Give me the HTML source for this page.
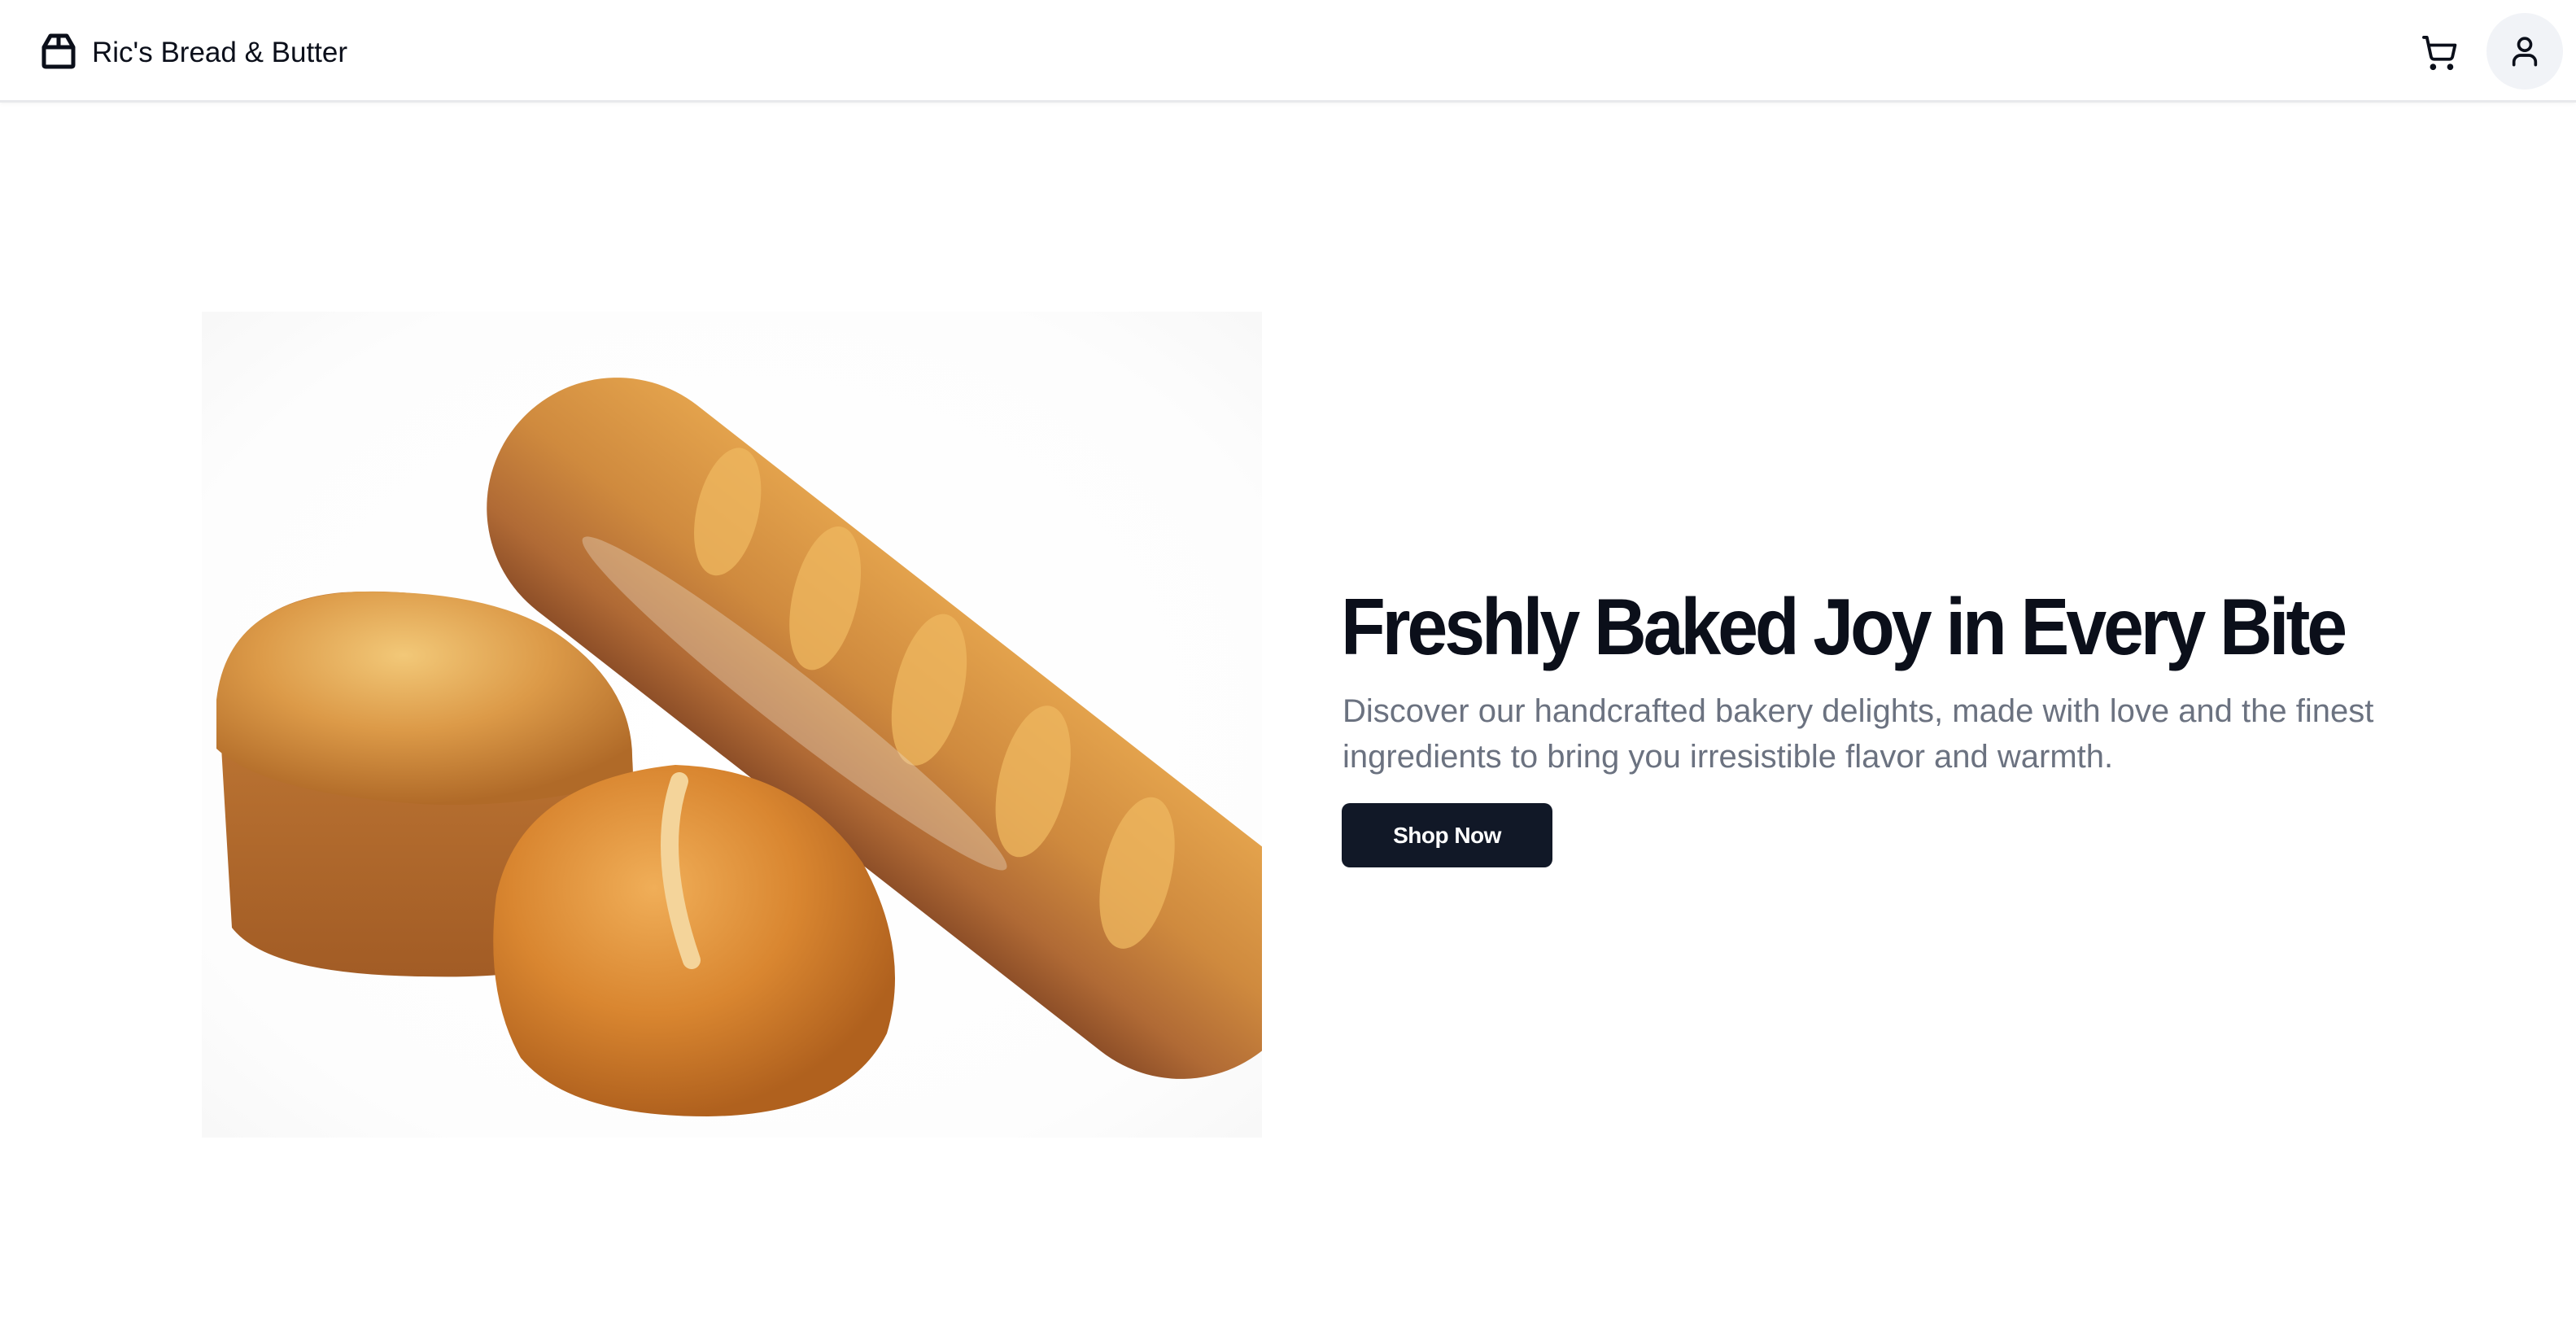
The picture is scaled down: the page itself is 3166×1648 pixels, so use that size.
<!DOCTYPE html>
<html><head><meta charset="utf-8"><style>
*{margin:0;padding:0;box-sizing:border-box}
html,body{width:3166px;height:1648px;background:#fff;overflow:hidden;font-family:"Liberation Sans",sans-serif}
.hdr{position:absolute;left:0;top:0;width:3166px;height:126px;border-bottom:3px solid #e8e9ec;box-shadow:0 2px 4px rgba(0,0,0,.04)}
.logo{position:absolute;left:50px;top:40px}
.brand{position:absolute;left:113px;top:45px;font-size:35px;color:#0b0f1a;letter-spacing:0px}
.cart{position:absolute;left:2975px;top:42px}
.av{position:absolute;left:3056px;top:16px;width:94px;height:94px;border-radius:50%;background:#f1f3f7}
.av svg{position:absolute;left:27px;top:25px}
.img{position:absolute;left:248px;top:383px;width:1303px;height:1015px}
h1{position:absolute;left:1648px;top:714px;font-size:98px;font-weight:bold;color:#0b0f1a;letter-spacing:-4.5px;white-space:nowrap;transform-origin:left top;transform:scaleX(0.915)}
p{position:absolute;left:1650px;top:846px;width:1310px;font-size:40px;line-height:56px;color:#6b7280;letter-spacing:0px}
.btn{position:absolute;left:1649px;top:987px;width:259px;height:79px;border-radius:10px;background:#111827;color:#fff;font-size:28px;font-weight:bold;text-align:center;line-height:79px;letter-spacing:-0.5px}
</style></head><body>
<div class="hdr">
<svg class="logo" width="44" height="46" viewBox="0 0 44 46" fill="none" stroke="#0b0f1a" stroke-width="5" stroke-linejoin="round">
<path d="M4 18 L12 4 H32 L40 18 V40 Q40 42 38 42 H6 Q4 42 4 40 Z"/><path d="M4 18 H40"/><path d="M22 4 V18"/></svg>
<div class="brand">Ric's Bread &amp; Butter</div>
<svg class="cart" width="46" height="46" viewBox="0 0 24 24" fill="none" stroke="#0b0f1a" stroke-width="2" stroke-linecap="round" stroke-linejoin="round"><circle cx="8" cy="21" r="1"/><circle cx="19" cy="21" r="1"/><path d="M2.05 2.05h2l2.66 12.42a2 2 0 0 0 2 1.58h9.78a2 2 0 0 0 1.95-1.57l1.65-7.43H5.12"/></svg>
<div class="av"><svg width="40" height="44" viewBox="0 0 24 24" fill="none" stroke="#0b0f1a" stroke-width="2.2" stroke-linecap="round"><circle cx="12" cy="7" r="4.5"/><path d="M4 22v-2a5 5 0 0 1 5-5h6a5 5 0 0 1 5 5v2"/></svg></div>
</div>

<svg class="img" viewBox="248 383 1303 1015" width="1303" height="1015">
<defs>
<radialGradient id="bg" cx="50%" cy="50%" r="70%"><stop offset="0" stop-color="#fff"/><stop offset=".8" stop-color="#fdfdfd"/><stop offset="1" stop-color="#f8f8f8"/></radialGradient>
<linearGradient id="loaf" x1="0" y1="0" x2="0" y2="1"><stop offset="0" stop-color="#e3a24c"/><stop offset=".45" stop-color="#cf8a3e"/><stop offset=".8" stop-color="#b06a35"/><stop offset="1" stop-color="#8e4f28"/></linearGradient>
<radialGradient id="pan" cx="45%" cy="30%" r="70%"><stop offset="0" stop-color="#f2c878"/><stop offset=".5" stop-color="#dc9a48"/><stop offset="1" stop-color="#b06a28"/></radialGradient>
<linearGradient id="panb" x1="0" y1="0" x2="0" y2="1"><stop offset="0" stop-color="#c9813a"/><stop offset="1" stop-color="#a25c25"/></linearGradient>
<radialGradient id="bun" cx="40%" cy="35%" r="65%"><stop offset="0" stop-color="#f0ae58"/><stop offset=".55" stop-color="#d98630"/><stop offset="1" stop-color="#b0611e"/></radialGradient>
<clipPath id="c"><rect x="248" y="383" width="1303" height="1015"/></clipPath>
</defs>
<rect x="248" y="383" width="1303" height="1015" fill="url(#bg)"/>
<g clip-path="url(#c)">
<g transform="translate(1105 895) rotate(38)">
<rect x="-600" y="-160" width="1200" height="320" rx="160" fill="url(#loaf)"/>
<g fill="#efb860" opacity=".75">
<ellipse cx="-330" cy="-80" rx="38" ry="80" transform="rotate(-25 -330 -80)"/>
<ellipse cx="-170" cy="-70" rx="40" ry="90" transform="rotate(-25 -170 -70)"/>
<ellipse cx="0" cy="-60" rx="42" ry="95" transform="rotate(-25 0 -60)"/>
<ellipse cx="170" cy="-50" rx="42" ry="95" transform="rotate(-25 170 -50)"/>
<ellipse cx="340" cy="-40" rx="42" ry="95" transform="rotate(-25 340 -40)"/>
</g>
<ellipse cx="-120" cy="55" rx="330" ry="35" fill="#e9d6c0" opacity=".4"/>
</g>
</g>
<path d="M268 850 Q290 740 420 728 Q560 720 640 770 Q780 810 778 960 L770 1150 Q700 1205 520 1200 Q330 1198 285 1140 Z" fill="url(#panb)"/>
<path d="M266 860 Q280 735 440 727 Q620 725 700 790 Q790 860 775 960 Q620 1000 480 985 Q320 970 266 920 Z" fill="url(#pan)"/>
<path d="M830 940 Q980 945 1060 1060 Q1120 1170 1090 1270 Q1040 1370 870 1372 Q700 1372 640 1300 Q595 1220 610 1100 Q640 960 830 940 Z" fill="url(#bun)"/>
<path d="M835 960 Q805 1050 850 1180" stroke="#f4d49a" stroke-width="22" fill="none" stroke-linecap="round"/>
</svg>

<h1>Freshly Baked Joy in Every Bite</h1>
<p>Discover our handcrafted bakery delights, made with love and the finest ingredients to bring you irresistible flavor and warmth.</p>
<div class="btn">Shop Now</div>
</body></html>
